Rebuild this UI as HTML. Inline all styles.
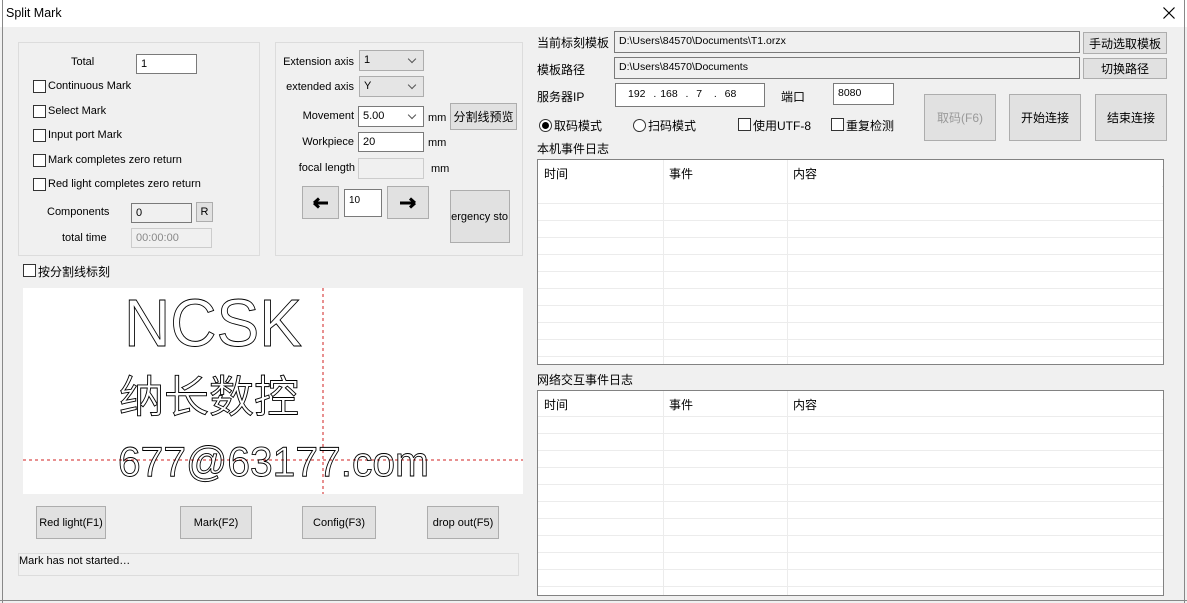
<!DOCTYPE html>
<html><head><meta charset="utf-8"><style>
*{box-sizing:border-box;margin:0;padding:0}
body{width:1187px;height:603px;background:#f0f0f0;font-family:"Liberation Sans","Noto Sans CJK SC",sans-serif;font-size:11px;color:#000;position:relative;overflow:hidden}
.a{position:absolute;white-space:nowrap}
.r{position:absolute;white-space:nowrap;text-align:right}
.box{position:absolute;border:1px solid #dcdcdc}
.in{position:absolute;background:#fff;border:1px solid #7a7a7a;padding:2px 4px;font-size:11px;white-space:nowrap}
.dis{position:absolute;background:#f0f0f0;border:1px solid #ccc;color:#888;padding:3px 4px}
.btn{position:absolute;background:#e1e1e1;border:1px solid #adadad;display:flex;align-items:center;justify-content:center;font-size:11px;overflow:hidden;white-space:nowrap}
.cb{position:absolute;width:13px;height:13px;border:1px solid #333;background:#fff}
.sel{position:absolute;background:#e5e5e5;border:1px solid #adadad;padding:3px 4px}
.sel::after{content:"";position:absolute;right:8px;top:5px;width:5px;height:5px;border-right:1px solid #555;border-bottom:1px solid #555;transform:rotate(45deg)}
.list{position:absolute;background:#fff;border:1px solid #828282;
background-image:repeating-linear-gradient(to bottom,transparent 0,transparent 16px,#ececec 16px,#ececec 17px);}
.ro{position:absolute;background:#f0f0f0;border:1px solid #7a7a7a;padding:3px 4px;font-size:10.5px}
.c{font-size:12px}
</style></head><body>
<div class="a" style="left:0;top:0;width:1187px;height:27px;background:#fff"></div>
<div class="a" style="left:6px;top:6px;font-size:12.5px">Split Mark</div>
<svg class="a" style="left:1163px;top:7px" width="12" height="12"><path d="M0.5 0.5L11.5 11.5M11.5 0.5L0.5 11.5" stroke="#000" stroke-width="1.2"/></svg>
<div class="a" style="left:2px;top:0;width:1px;height:603px;background:#888"></div>
<div class="a" style="left:1184px;top:0;width:1px;height:603px;background:#888"></div>
<div class="a" style="left:0;top:600px;width:1187px;height:1px;background:#888"></div>

<!-- left group -->
<div class="box" style="left:18px;top:42px;width:242px;height:214px"></div>
<div class="a" style="left:71px;top:56px">Total</div>
<div class="in" style="left:136px;top:54px;width:61px;height:20px;padding-top:3px">1</div>
<div class="cb" style="left:33px;top:80px"></div><div class="a" style="left:48px;top:80px">Continuous Mark</div>
<div class="cb" style="left:33px;top:105px"></div><div class="a" style="left:48px;top:105px">Select Mark</div>
<div class="cb" style="left:33px;top:129px"></div><div class="a" style="left:48px;top:129px">Input port Mark</div>
<div class="cb" style="left:33px;top:154px"></div><div class="a" style="left:48px;top:154px">Mark completes zero return</div>
<div class="cb" style="left:33px;top:178px"></div><div class="a" style="left:48px;top:178px">Red light completes zero return</div>
<div class="a" style="left:47px;top:206px">Components</div>
<div class="ro" style="left:131px;top:203px;width:61px;height:20px;font-size:11px">0</div>
<div class="btn" style="left:196px;top:202px;width:17px;height:20px">R</div>
<div class="a" style="left:62px;top:232px">total time</div>
<div class="dis" style="left:131px;top:228px;width:81px;height:20px">00:00:00</div>

<!-- middle group -->
<div class="box" style="left:275px;top:42px;width:248px;height:214px"></div>
<div class="r" style="right:833px;top:56px">Extension axis</div>
<div class="sel" style="left:359px;top:50px;width:65px;height:21px">1</div>
<div class="r" style="right:833px;top:81px">extended axis</div>
<div class="sel" style="left:359px;top:76px;width:65px;height:21px">Y</div>
<div class="r" style="right:833px;top:110px">Movement</div>
<div class="sel" style="left:358px;top:106px;width:66px;height:21px;background:#fff;border-color:#7a7a7a">5.00</div>
<div class="a" style="left:428px;top:112px">mm</div>
<div class="btn" style="left:450px;top:103px;width:67px;height:27px;font-size:12px">分割线预览</div>
<div class="r" style="right:833px;top:136px">Workpiece</div>
<div class="in" style="left:358px;top:132px;width:66px;height:20px;padding-top:3px">20</div>
<div class="a" style="left:428px;top:137px">mm</div>
<div class="r" style="right:832px;top:162px">focal length</div>
<div class="dis" style="left:358px;top:158px;width:66px;height:21px"></div>
<div class="a" style="left:431px;top:163px">mm</div>
<div class="btn" style="left:302px;top:186px;width:37px;height:33px"><svg width="16" height="12"><path d="M1 6H15M1 6L6 1.5M1 6L6 10.5" stroke="#000" stroke-width="3" fill="none"/></svg></div>
<div class="in" style="left:344px;top:189px;width:38px;height:28px;font-size:10px;padding-top:5px">10</div>
<div class="btn" style="left:387px;top:186px;width:42px;height:33px"><svg width="16" height="12"><path d="M0 6H14M15 6L10 1.5M15 6L10 10.5" stroke="#000" stroke-width="3" fill="none"/></svg></div>
<div class="btn" style="left:450px;top:190px;width:60px;height:53px;justify-content:flex-end;padding-right:1px"><span style="margin-left:-20px">Emergency sto</span></div>

<div class="cb" style="left:23px;top:264px"></div><div class="a c" style="left:38px;top:263px">按分割线标刻</div>

<!-- preview -->
<div class="a" style="left:23px;top:288px;width:500px;height:206px;background:#fff">
<svg width="500" height="206" style="position:absolute;left:0;top:0">
<line x1="300" y1="0" x2="300" y2="206" stroke="#d02020" stroke-dasharray="3,3"/>
<line x1="0" y1="172" x2="500" y2="172" stroke="#d02020" stroke-dasharray="3,3"/>
<g fill="none" stroke="#000" stroke-width="0.9">
<text x="101" y="58" font-family="Liberation Sans" font-size="67" textLength="178" lengthAdjust="spacingAndGlyphs">NCSK</text>
<text x="96" y="124" font-family="Noto Sans CJK SC" font-size="44" textLength="180" lengthAdjust="spacingAndGlyphs">纳长数控</text>
<text x="95" y="188" font-family="Liberation Sans" font-size="42" textLength="311" lengthAdjust="spacingAndGlyphs">677@63177.com</text>
</g></svg></div>

<div class="btn" style="left:36px;top:506px;width:70px;height:33px">Red light(F1)</div>
<div class="btn" style="left:180px;top:506px;width:72px;height:33px">Mark(F2)</div>
<div class="btn" style="left:302px;top:506px;width:74px;height:33px">Config(F3)</div>
<div class="btn" style="left:427px;top:506px;width:72px;height:33px">drop out(F5)</div>
<div class="a" style="left:18px;top:553px;width:501px;height:23px;border:1px solid #dcdcdc;padding:1px 0">Mark has not started…</div>

<!-- right -->
<div class="a c" style="left:537px;top:34px">当前标刻模板</div>
<div class="ro" style="left:614px;top:31px;width:466px;height:22px">D:\Users\84570\Documents\T1.orzx</div>
<div class="btn c" style="left:1083px;top:32px;width:84px;height:22px;font-size:12px">手动选取模板</div>
<div class="a c" style="left:537px;top:61px">模板路径</div>
<div class="ro" style="left:614px;top:57px;width:466px;height:22px">D:\Users\84570\Documents</div>
<div class="btn" style="left:1083px;top:58px;width:84px;height:21px;font-size:12px">切换路径</div>
<div class="a c" style="left:537px;top:88px">服务器IP</div>
<div class="in" style="left:615px;top:83px;width:150px;height:24px;padding:4px 0 0 12px;font-size:10.5px;word-spacing:1px">192 &nbsp;. 168 &nbsp;. &nbsp;7 &nbsp; . &nbsp;68</div>
<div class="a c" style="left:781px;top:88px">端口</div>
<div class="in" style="left:833px;top:83px;width:61px;height:22px;font-size:10.5px;padding-top:3px">8080</div>
<div class="btn" style="left:924px;top:94px;width:72px;height:47px;color:#999;font-size:12px">取码(F6)</div>
<div class="btn" style="left:1009px;top:94px;width:72px;height:47px;font-size:12px">开始连接</div>
<div class="btn" style="left:1095px;top:94px;width:72px;height:47px;font-size:12px">结束连接</div>
<div class="a" style="left:539px;top:119px;width:13px;height:13px;border:1px solid #333;border-radius:50%;background:#fff"><div style="position:absolute;left:2px;top:2px;width:7px;height:7px;border-radius:50%;background:#000"></div></div>
<div class="a c" style="left:554px;top:117px">取码模式</div>
<div class="a" style="left:633px;top:119px;width:13px;height:13px;border:1px solid #333;border-radius:50%;background:#fff"></div>
<div class="a c" style="left:648px;top:117px">扫码模式</div>
<div class="cb" style="left:738px;top:118px"></div><div class="a c" style="left:753px;top:117px">使用UTF-8</div>
<div class="cb" style="left:831px;top:118px"></div><div class="a c" style="left:846px;top:117px">重复检测</div>
<div class="a c" style="left:537px;top:140px">本机事件日志</div>
<div class="list" style="left:537px;top:159px;width:627px;height:206px;background-position:0 10px"></div>
<div class="a" style="left:538px;top:160px;width:624px;height:28px;background:#fff"></div>
<div class="a" style="left:663px;top:160px;width:1px;height:204px;background:#ececec"></div>
<div class="a" style="left:787px;top:160px;width:1px;height:204px;background:#ececec"></div>
<div class="a c" style="left:544px;top:165px">时间</div>
<div class="a c" style="left:669px;top:165px">事件</div>
<div class="a c" style="left:793px;top:165px">内容</div>

<div class="a c" style="left:537px;top:371px">网络交互事件日志</div>
<div class="list" style="left:537px;top:390px;width:627px;height:206px;background-position:0 9px"></div>
<div class="a" style="left:538px;top:391px;width:624px;height:25px;background:#fff"></div>
<div class="a" style="left:663px;top:391px;width:1px;height:204px;background:#ececec"></div>
<div class="a" style="left:787px;top:391px;width:1px;height:204px;background:#ececec"></div>
<div class="a c" style="left:544px;top:396px">时间</div>
<div class="a c" style="left:669px;top:396px">事件</div>
<div class="a c" style="left:793px;top:396px">内容</div>
</body></html>
